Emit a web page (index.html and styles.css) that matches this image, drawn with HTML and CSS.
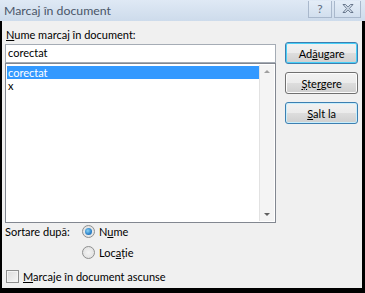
FILE: index.html
```html
<!DOCTYPE html>
<html lang="ro">
<head>
<meta charset="utf-8">
<title>Marcaj în document</title>
<link rel="stylesheet" href="styles.css">
</head>
<body>
<div class="window">
  <div class="titlebar">
    <span class="title">Marcaj în document</span>
    <div class="tbtns">
      <span class="tbtn help">?</span>
      <span class="tbtn close">
        <svg width="12" height="9" viewBox="0 0 12 9"><path d="M1 0.5h2.5L6 3.2 8.5 0.5H11L7.3 4.5 11 8.5H8.5L6 5.8 3.5 8.5H1L4.7 4.5Z" fill="none" stroke="#5a6a80" stroke-width="0.9"/></svg>
      </span>
    </div>
  </div>
  <div class="client">
    <div class="main">
      <div class="left">
        <div class="label"><u>N</u>ume marcaj în document:</div>
        <div class="input">corectat</div>
        <div class="list">
          <div class="items">
            <div class="item sel">corectat</div>
            <div class="item">x</div>
          </div>
          <div class="scroll">
            <span class="arr up"></span>
            <span class="arr down"></span>
          </div>
        </div>
      </div>
      <div class="right">
        <div class="btn default"><span>Ad<u>ă</u>ugare</span></div>
        <div class="btn"><span><u>Ș</u>te<u>r</u>gere</span></div>
        <div class="btn default2"><span><u>S</u>alt la</span></div>
      </div>
    </div>
    <div class="sort">
      <span class="sortlabel">Sortare după:</span>
      <div class="radios">
        <label class="radio"><span class="rb on"></span><span>N<u>u</u>me</span></label>
        <label class="radio"><span class="rb"></span><span>Loc<u>a</u>ție</span></label>
      </div>
    </div>
    <label class="check"><span class="cb"></span><span><u>M</u>arcaje în document ascunse</span></label>
  </div>
</div>
</body>
</html>
```
FILE: styles.css
```css
html, body {
  margin: 0;
  padding: 0;
  background: #000;
}
body {
  font-family: "Lato", "Liberation Sans", sans-serif;
  font-size: 11px;
  color: #000;
}
.window {
  width: 365px;
  height: 293px;
  display: flex;
  flex-direction: column;
  background: #000;
  overflow: hidden;
}
.titlebar {
  height: 21px;
  flex: none;
  display: flex;
  align-items: center;
  justify-content: space-between;
  background: linear-gradient(#dfe9f5, #cddbeb);
}
.title {
  font-family: "Lato", sans-serif;
  font-size: 12.3px;
  color: #4a5668;
  margin-left: 4px;
  margin-top: -1px;
}
.tbtns {
  display: flex;
  gap: 2px;
  margin-right: 4px;
  margin-top: -3px;
}
.tbtn {
  box-sizing: border-box;
  height: 17px;
  border: 1px solid #a9b8cc;
  border-top: none;
  background: linear-gradient(#e4edf7, #d2dfee);
  display: flex;
  align-items: center;
  justify-content: center;
  color: #5a6a80;
  font-size: 12px;
}
.help { width: 24px; }
.close { width: 27px; }
.client {
  flex: 1;
  margin: 0 3px 5px 2px;
  background: #f0f0f0;
  padding: 6px 4px 0 3px;
  display: flex;
  flex-direction: column;
}
.main {
  display: flex;
  gap: 9px;
}
.left {
  width: 272px;
  display: flex;
  flex-direction: column;
}
.label {
  height: 16px;
  line-height: 16px;
  padding-left: 1px;
  margin-bottom: 1px;
}
.input {
  box-sizing: border-box;
  height: 19px;
  background: #fff;
  border: 1px solid #a5acb5;
  line-height: 16px;
  padding-left: 2px;
}
.list {
  box-sizing: border-box;
  height: 160px;
  background: #fff;
  border: 1px solid #828790;
  display: flex;
  padding: 1px;
}
.items {
  flex: 1;
  padding-top: 1px;
}
.item {
  height: 13px;
  line-height: 13px;
  padding-left: 1px;
}
.item.sel {
  background: #3399ff;
  color: #fff;
}
.scroll {
  width: 14px;
  background: #f4f4f4;
  border-left: 1px solid #e2e2e2;
  position: relative;
}
.arr {
  position: absolute;
  left: 4px;
  width: 0;
  height: 0;
  border-left: 3px solid transparent;
  border-right: 3px solid transparent;
}
.arr.up { top: 5px; border-bottom: 3px solid #a0a0a0; }
.arr.down { bottom: 5px; border-top: 3px solid #606060; }
.right {
  width: 73px;
  display: flex;
  flex-direction: column;
  gap: 8px;
  padding-top: 15px;
}
.btn {
  box-sizing: border-box;
  height: 22px;
  border: 1px solid #707070;
  border-radius: 3px;
  background: linear-gradient(#f2f2f2 0%, #ebebeb 50%, #dddddd 51%, #cfcfcf 100%);
  display: flex;
  align-items: center;
  justify-content: center;
  box-shadow: inset 0 0 0 1px #fcfcfc;
}
.btn.default {
  border-color: #3c7fb1;
  box-shadow: inset 0 0 0 1px #48d0f8;
}
.btn.default2 {
  border-color: #3c7fb1;
  box-shadow: inset 0 0 0 1px #c8eefc;
}
.sort {
  display: flex;
  margin-top: 1px;
}
.sortlabel {
  width: 77px;
  padding-top: 1px;
}
.radios {
  display: flex;
  flex-direction: column;
  gap: 7px;
}
.radio {
  display: flex;
  align-items: center;
  gap: 4px;
  height: 14px;
}
.rb {
  box-sizing: border-box;
  width: 13px;
  height: 13px;
  border-radius: 50%;
  border: 1px solid #8e8f8f;
  background: radial-gradient(circle, #f4f4f4 0%, #dcdcdc 100%);
  position: relative;
}
.rb.on::after {
  content: "";
  position: absolute;
  left: 2px;
  top: 2px;
  width: 7px;
  height: 7px;
  border-radius: 50%;
  background: radial-gradient(circle at 40% 40%, #8ad3f5 0%, #2a80c8 60%, #1a5f9e 100%);
}
.check {
  display: flex;
  align-items: center;
  gap: 4px;
  margin-top: 11px;
  margin-left: 1px;
}
.cb {
  box-sizing: border-box;
  width: 13px;
  height: 13px;
  border: 1px solid #8e8f8f;
  background: linear-gradient(135deg, #dcdcdc, #f6f6f6);
  box-shadow: inset 0 0 0 1px #f4f4f4;
}
```
